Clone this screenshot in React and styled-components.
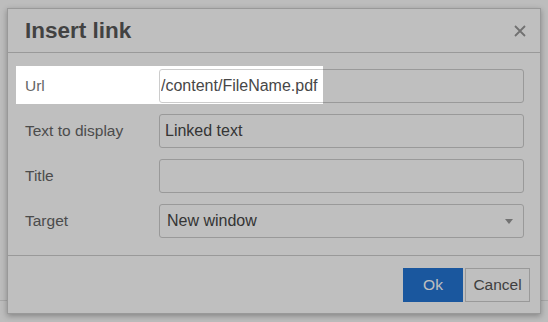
import React from 'react';
import styled, { createGlobalStyle } from 'styled-components';

const GlobalStyle = createGlobalStyle`
  html, body {
    margin: 0;
    padding: 0;
    width: 548px;
    height: 322px;
    overflow: hidden;
    background: #fcfcfc;
    font-family: "Liberation Sans", Arial, sans-serif;
  }
`;

const Page = styled.div`
  position: relative;
  width: 548px;
  height: 322px;
`;

const PageBody = styled.div`
  height: 300px;
  border-bottom: 1px solid #e0e0e0;
`;

const Dialog = styled.div`
  position: absolute;
  left: 7px;
  top: 8px;
  width: 532px;
  border: 1px solid #cdcdcd;
  background: #fff;
  box-shadow: 0 2px 6px rgba(0, 0, 0, 0.3);
  display: flex;
  flex-direction: column;
`;

const Header = styled.div`
  height: 43px;
  display: flex;
  align-items: center;
  justify-content: space-between;
  padding: 0 14px 0 17px;
  border-bottom: 1px solid #ccc;
`;

const Title = styled.h1`
  margin: 0;
  font-size: 22.5px;
  font-weight: bold;
  color: #595959;
`;

const CloseButton = styled.button`
  border: 0;
  background: none;
  padding: 0;
  width: 12px;
  height: 12px;
  display: flex;
  color: #979797;
`;

const Body = styled.div`
  display: flex;
  flex-direction: column;
  gap: 11px;
  padding: 16px 16px 17px 17px;
`;

const Row = styled.div`
  position: relative;
  display: flex;
  align-items: center;
  height: 34px;
`;

const Label = styled.label`
  width: 134px;
  flex: none;
  font-size: 15.5px;
  color: #666;
`;

const Field = styled.input`
  flex: 1;
  height: 34px;
  box-sizing: border-box;
  border: 1px solid #ccc;
  border-radius: 3px;
  background: transparent;
  padding: 0 4px 0 ${(p) => (p.$indent != null ? p.$indent : 5)}px;
  font-family: inherit;
  font-size: 16px;
  color: #474747;
  outline: none;
`;

const Select = styled.div`
  flex: 1;
  height: 34px;
  box-sizing: border-box;
  border: 1px solid #ccc;
  border-radius: 3px;
  display: flex;
  align-items: center;
  justify-content: space-between;
  padding: 0 10px 0 7px;
  font-size: 16px;
  color: #474747;
`;

const Caret = styled.span`
  width: 0;
  height: 0;
  border-left: 4px solid transparent;
  border-right: 4px solid transparent;
  border-top: 5px solid #999;
`;

const Spotlight = styled.span`
  position: absolute;
  top: -3px;
  bottom: -1px;
  left: -9px;
  width: 307px;
  pointer-events: none;
  z-index: 5;
  box-shadow: 0 0 0 1400px rgba(0, 0, 0, 0.25);
`;

const Footer = styled.div`
  display: flex;
  justify-content: flex-end;
  align-items: center;
  gap: 2px;
  height: 57px;
  padding-right: 10px;
  border-top: 1px solid #ccc;
`;

const Button = styled.button`
  width: ${(p) => (p.$primary ? 60 : 65)}px;
  height: 34px;
  box-sizing: border-box;
  padding: 0;
  border: 1px solid ${(p) => (p.$primary ? '#2375d3' : '#ccc')};
  background: ${(p) => (p.$primary ? '#2375d3' : '#fff')};
  color: ${(p) => (p.$primary ? '#fff' : '#555')};
  font-family: inherit;
  font-size: 15.5px;
  border-radius: 0;
`;

const fields = [
  { label: 'Text to display', value: 'Linked text' },
  { label: 'Title', value: '' },
];

const App = () => {
  return (
    <>
      <GlobalStyle />
      <Page>
        <PageBody />
        <Dialog>
          <Header>
            <Title>Insert link</Title>
            <CloseButton aria-label="Close">
              <svg width="12" height="12" viewBox="0 0 12 12">
                <path d="M1 1 L11 11 M11 1 L1 11" stroke="currentColor" strokeWidth="1.8" />
              </svg>
            </CloseButton>
          </Header>
          <Body>
            <Row>
              <Label>Url</Label>
              <Field readOnly defaultValue="/content/FileName.pdf" $indent={1} />
              <Spotlight />
            </Row>
            {fields.map((f) => (
              <Row key={f.label}>
                <Label>{f.label}</Label>
                <Field readOnly defaultValue={f.value} />
              </Row>
            ))}
            <Row>
              <Label>Target</Label>
              <Select>
                New window
                <Caret />
              </Select>
            </Row>
          </Body>
          <Footer>
            <Button $primary>Ok</Button>
            <Button>Cancel</Button>
          </Footer>
        </Dialog>
      </Page>
    </>
  );
};

export default App;
